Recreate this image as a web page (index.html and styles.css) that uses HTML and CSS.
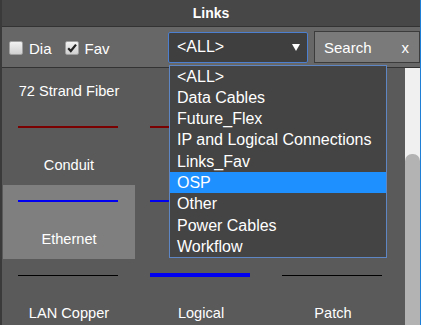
FILE: index.html
```html
<!DOCTYPE html>
<html>
<head>
<meta charset="utf-8">
<link rel="stylesheet" href="styles.css">
</head>
<body>
<div class="panel">
  <div class="header">Links</div>
  <div class="toolbar">
    <label class="chk"><span class="box"></span>Dia</label>
    <label class="chk chk-fav"><span class="box"><svg width="12" height="12" viewBox="0 0 12 12"><path d="M2.2 6.3 L4.8 9 L10 2.6" fill="none" stroke="#222" stroke-width="2.2"/></svg></span>Fav</label>
    <div class="select">
      <span class="sel-text">&lt;ALL&gt;</span>
      <svg class="arrow" width="8" height="7" viewBox="0 0 8 7"><path d="M0 0 H8 L4 7 Z" fill="#fff"/></svg>
      <ul class="dropdown">
        <li>&lt;ALL&gt;</li>
        <li>Data Cables</li>
        <li>Future_Flex</li>
        <li>IP and Logical Connections</li>
        <li>Links_Fav</li>
        <li class="hl">OSP</li>
        <li>Other</li>
        <li>Power Cables</li>
        <li>Workflow</li>
      </ul>
    </div>
    <div class="search"><span>Search</span><span class="clear">x</span></div>
  </div>
  <div class="body">
    <div class="view">
      <div class="grid">
        <div class="cell"><div class="lw"><div class="line red"></div></div><div class="label">72 Strand Fiber</div></div>
        <div class="cell"><div class="lw"><div class="line red"></div></div><div class="label">Aerial</div></div>
        <div class="cell"><div class="lw"><div class="line red"></div></div><div class="label"></div></div>
        <div class="cell"><div class="lw"><div class="line red"></div></div><div class="label">Conduit</div></div>
        <div class="cell"><div class="lw"><div class="line red"></div></div><div class="label"></div></div>
        <div class="cell"><div class="lw"><div class="line blue"></div></div><div class="label"></div></div>
        <div class="cell sel"><div class="lw"><div class="line blue"></div></div><div class="label">Ethernet</div></div>
        <div class="cell"><div class="lw"><div class="line blue"></div></div><div class="label"></div></div>
        <div class="cell"><div class="lw"><div class="line black"></div></div><div class="label"></div></div>
        <div class="cell"><div class="lw"><div class="line black"></div></div><div class="label">LAN Copper</div></div>
        <div class="cell"><div class="lw"><div class="line blue thick"></div></div><div class="label">Logical</div></div>
        <div class="cell"><div class="lw"><div class="line black"></div></div><div class="label">Patch</div></div>
      </div>
    </div>
    <div class="scrollbar"><div class="thumb"></div></div>
  </div>
</div>
</body>
</html>
```
FILE: styles.css
```css
html, body {
  margin: 0;
  padding: 0;
  background: #5a5a5a;
}
.panel {
  width: 421px;
  height: 325px;
  box-sizing: border-box;
  border-left: 2px solid #3a3a3a;
  border-right: 1px solid #1f7fd6;
  display: flex;
  flex-direction: column;
  font-family: "Liberation Sans", Arial, sans-serif;
  color: #fff;
  overflow: hidden;
}
.header {
  height: 26px;
  flex: none;
  background: #474747;
  border-bottom: 1px solid #333;
  text-align: center;
  font-weight: bold;
  font-size: 14px;
  line-height: 26px;
}
.toolbar {
  height: 40px;
  flex: none;
  background: #676767;
  border-bottom: 1px solid #333;
  display: flex;
  align-items: center;
  padding-left: 7px;
  position: relative;
  z-index: 2;
}
.chk {
  display: flex;
  align-items: center;
  font-size: 15px;
  gap: 6px;
  margin-right: 13px;
  margin-top: 2px;
}
.chk-fav {
  margin-right: 0;
}
.box {
  width: 12px;
  height: 12px;
  border: 1px solid #a0a0a0;
  border-radius: 2px;
  background: linear-gradient(#f2f2f2, #d0d0d0);
  display: flex;
  align-items: center;
  justify-content: center;
}
.select {
  margin-left: auto;
  width: 140px;
  height: 31px;
  box-sizing: border-box;
  background: #3f3f3f;
  border: 1px solid #4d7fd0;
  border-radius: 2px;
  display: flex;
  align-items: center;
  justify-content: space-between;
  padding: 0 7px 0 8px;
  font-size: 16px;
  position: relative;
}
.arrow {
  margin-top: 1px;
}
.dropdown {
  position: absolute;
  left: 0;
  top: 32px;
  width: 218px;
  margin: 0;
  padding: 0;
  list-style: none;
  background: #444;
  border: 1px solid #5f86c4;
  box-sizing: border-box;
  font-size: 16px;
}
.dropdown li {
  height: 21.33px;
  line-height: 21px;
  padding-left: 7px;
  white-space: nowrap;
}
.dropdown li.hl {
  background: #1e90ff;
}
.search {
  margin-left: 6px;
  width: 106px;
  height: 32px;
  box-sizing: border-box;
  background: #7a7a7a;
  border: 1px solid #3c3c3c;
  display: flex;
  align-items: center;
  justify-content: space-between;
  padding: 0 10px 0 9px;
  font-size: 15px;
}
.body {
  flex: 1;
  display: flex;
  min-height: 0;
  background: #5a5a5a;
}
.view {
  flex: 1;
  overflow: hidden;
  padding-left: 1px;
}
.grid {
  margin-top: -31px;
  display: grid;
  grid-template-columns: repeat(3, 132px);
}
.cell {
  height: 74px;
  display: flex;
  flex-direction: column;
  align-items: center;
  padding-top: 14px;
  box-sizing: border-box;
}
.cell.sel {
  background: #7f7f7f;
}
.lw {
  height: 4px;
  width: 100px;
  display: flex;
  align-items: center;
  margin-left: -2px;
}
.line {
  width: 100px;
  height: 2px;
}
.line.red { background: #7a0000; }
.line.blue { background: #0000f0; }
.line.black { background: #000; height: 1px; }
.line.thick { height: 4px; }
.label {
  margin-top: 28px;
  font-size: 14.6px;
  line-height: 16px;
  height: 16px;
  white-space: nowrap;
}
.scrollbar {
  width: 15px;
  flex: none;
  background: #f0f0f0;
  display: flex;
  flex-direction: column;
}
.thumb {
  margin-top: 86px;
  flex: 1;
  background: #b3b3b3;
  border-radius: 7px 7px 0 0;
}
```
